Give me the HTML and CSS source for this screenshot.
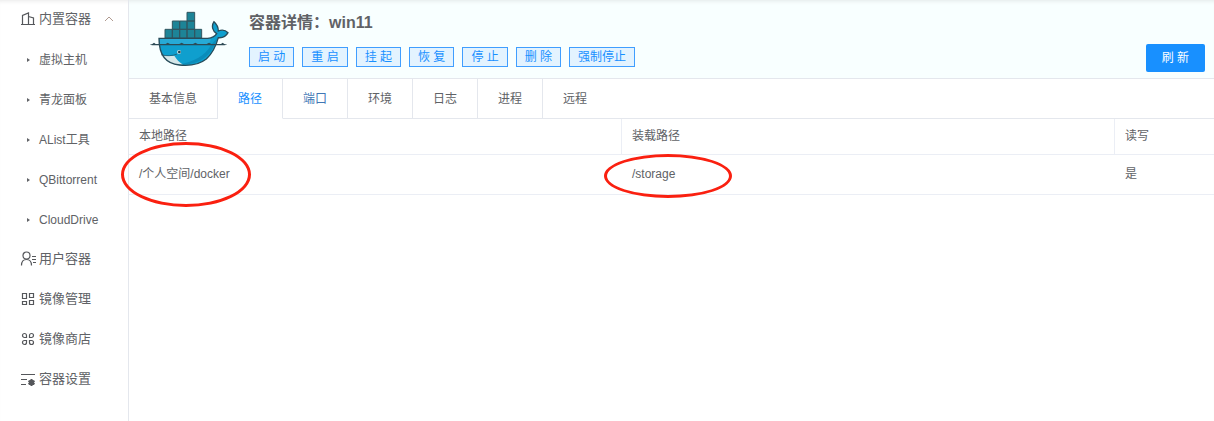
FILE: index.html
```html
<!DOCTYPE html>
<html lang="zh-CN">
<head>
  <meta charset="UTF-8">
  <title>容器详情</title>
  <link rel="stylesheet" href="styles.css">
</head>
<body>
  <nav class="sidebar">
    <a class="menu-item" href="#">
      <svg class="menu-icon" viewBox="0 0 16 16"><path d="M1 13.500h14M2.500 13.500V4.500L8.500 2v11.500M8.500 5.500l5 1.500v6.500"/></svg>
      内置容器
      <svg class="menu-arrow" viewBox="0 0 10 6"><path d="M1 5l4-4 4 4"/></svg>
    </a>
    <a class="sub-item" href="#">虚拟主机</a>
    <a class="sub-item" href="#">青龙面板</a>
    <a class="sub-item" href="#">AList工具</a>
    <a class="sub-item" href="#">QBittorrent</a>
    <a class="sub-item" href="#">CloudDrive</a>
    <a class="menu-item" href="#">
      <svg class="menu-icon" viewBox="0 0 16 16"><circle cx="6.500" cy="4.500" r="3.500"/><path d="M1.500 14.500c0-4 2-6 5-6s5 2 5 6M12 5.500h4M12 8.500h4M13 11.500h3"/></svg>
      用户容器
    </a>
    <a class="menu-item" href="#">
      <svg class="menu-icon" viewBox="0 0 16 16"><path d="M2.500 2.500h4v5h-4zM9.500 2.500h4v4h-4zM2.500 10.500h4v3h-4zM9.500 9.500h4v4h-4z"/></svg>
      镜像管理
    </a>
    <a class="menu-item" href="#">
      <svg class="menu-icon" viewBox="0 0 16 16"><path d="M6.500 6.500h-2a2 2 0 1 1 2-2zM9.500 6.500v-2a2 2 0 1 1 2 2zM6.500 9.500v2a2 2 0 1 1-2-2zM9.500 9.500h2a2 2 0 1 1-2 2z"/></svg>
      镜像商店
    </a>
    <a class="menu-item" href="#">
      <svg class="menu-icon" viewBox="0 0 16 16"><path d="M1 3.500h14M1 8.500h6M1 13.500h5"/><path class="gear" d="M11.500 8v7M8.500 9.800l6 3.400M14.500 9.800l-6 3.400"/><circle class="gear" cx="11.500" cy="11.500" r="1.700"/></svg>
      容器设置
    </a>
  </nav>

  <main class="content">
    <header class="detail-header">
      <svg class="logo" viewBox="28 33 240 168">
        <path class="logo-boxes" d="M142 37h23v26h-23zM98 63h22v25h-22zM120 63h22v25h-22zM142 63h23v25h-23zM76 88h22v26h-22zM98 88h22v26h-22zM120 88h22v26h-22zM142 88h23v26h-23zM165 88h21v26h-21z"/>
        <path class="logo-body" d="M58 115H204C216 114 226 109 231 101C219 94 214 78 223 65C231 72 236 82 236 93C246 89 258 91 265 98C259 110 248 114 236 113C229 138 218 161 200 177C180 193 149 198 119 195C82 192 58 168 58 115Z"/>
        <path class="logo-shade" d="M233 113C223 146 207 167 183 181C162 192 142 194 125 193C158 184 196 170 214 135Z"/>
        <path class="logo-belly" d="M64 164C78 169 94 169 104 167C110 177 119 187 130 194C98 195 76 184 64 164Z"/>
        <path class="logo-deck" d="M59 116H214L208 133H59Z"/>
        <path class="logo-wave" d="M30 134L38 132L43 128L48 132L60 132H78L84 128L91 132H119L126 128L133 132H160L167 128L174 132H201L208 128L215 132H238L244 132L249 128L254 132L263 134L254 136H38Z"/>
        <path class="logo-outline" d="M58 115H204C216 114 226 109 231 101C219 94 214 78 223 65C231 72 236 82 236 93C246 89 258 91 265 98C259 110 248 114 236 113C229 138 218 161 200 177C180 193 149 198 119 195C82 192 58 168 58 115Z"/>
        <path class="logo-mouth" d="M64 164C79 169 99 168 112 162"/>
        <circle class="logo-eye" cx="118" cy="156" r="6"/>
        <circle class="logo-pupil" cx="119" cy="156" r="4"/>
      </svg>
      <div class="detail-info">
        <h1>容器详情：win11</h1>
        <div class="actions">
          <button class="btn" type="button">启 动</button>
          <button class="btn" type="button">重 启</button>
          <button class="btn" type="button">挂 起</button>
          <button class="btn" type="button">恢 复</button>
          <button class="btn" type="button">停 止</button>
          <button class="btn" type="button">删 除</button>
          <button class="btn" type="button">强制停止</button>
        </div>
      </div>
      <button class="btn-refresh" type="button">刷 新</button>
    </header>

    <div class="tabs">
      <a class="tab" href="#">基本信息</a>
      <a class="tab active" href="#">路径</a>
      <a class="tab hover" href="#">端口</a>
      <a class="tab" href="#">环境</a>
      <a class="tab" href="#">日志</a>
      <a class="tab" href="#">进程</a>
      <a class="tab last" href="#">远程</a>
    </div>

    <table class="paths">
      <thead>
        <tr>
          <th>本地路径</th>
          <th>装载路径</th>
          <th class="col-rw">读写</th>
        </tr>
      </thead>
      <tbody>
        <tr>
          <td>/个人空间/docker<span class="mark mark-local"></span></td>
          <td>/storage<span class="mark mark-mount"></span></td>
          <td>是</td>
        </tr>
      </tbody>
    </table>
  </main>
</body>
</html>
```
FILE: styles.css
```css
* {
  box-sizing: border-box;
}
body {
  margin: 0;
  display: flex;
  min-height: 100vh;
  font-family: "Liberation Sans", "Noto Sans CJK SC", sans-serif;
  font-size: 12px;
  line-height: 18px;
  color: #606266;
  background: #fff;
  box-shadow: inset 0 4px 4px -3px #e8e8e8;
}
a {
  color: inherit;
  text-decoration: none;
}

/* sidebar */
.sidebar {
  flex: 0 0 129px;
  border-right: 1px solid #e4e7ed;
}
.menu-item,
.sub-item {
  display: flex;
  align-items: center;
  height: 40px;
}
.menu-item {
  padding-left: 20px;
  padding-bottom: 2px;
  font-size: 13px;
}
.menu-icon {
  width: 16px;
  height: 16px;
  margin-right: 3px;
  fill: none;
  stroke: #55575b;
  stroke-width: 1.2;
}
.menu-icon .gear {
  stroke-width: 2;
}
.menu-arrow {
  width: 10px;
  height: 6px;
  margin-left: 13px;
  fill: none;
  stroke: #b09a90;
}
.sub-item {
  padding-left: 27px;
}
.sub-item::before {
  content: "";
  margin-right: 9px;
  border: 2px solid transparent;
  border-left: 3px solid #606266;
  border-right: 0;
}

/* header */
.content {
  flex: 1;
  min-width: 0;
}
.detail-header {
  display: flex;
  height: 79px;
  padding: 11px 9px 0 20px;
  background: #f8ffff;
  border-bottom: 1px solid #e4e7ed;
  box-shadow: inset 0 4px 4px -3px #e3e8e8;
}
.logo {
  width: 80px;
  height: 56px;
  margin-right: 20px;
}
.logo-boxes {
  fill: #1d8497;
  stroke: #325660;
  stroke-width: 3;
}
.logo-body {
  fill: #0f9fce;
}
.logo-shade {
  fill: #0a8cba;
}
.logo-belly {
  fill: #d5e7e9;
}
.logo-deck {
  fill: #27aad6;
}
.logo-wave {
  fill: #2d4a55;
}
.logo-outline,
.logo-mouth {
  fill: none;
  stroke: #284c5a;
  stroke-width: 4;
}
.logo-mouth {
  stroke-width: 2;
}
.logo-eye {
  fill: #c8dde0;
}
.logo-pupil {
  fill: #24414c;
}
.detail-info {
  flex: 1;
}
.detail-info h1 {
  margin: 0 0 12px;
  font-size: 16px;
  line-height: 24px;
}
.actions {
  display: flex;
  gap: 8px;
}
.btn,
.btn-refresh {
  font-family: inherit;
  font-size: 12px;
  cursor: pointer;
}
.btn {
  height: 20px;
  padding: 0 8px;
  line-height: 18px;
  color: #1890ff;
  background: #e3f3ff;
  border: 1px solid #409eff;
}
.btn-refresh {
  height: 28px;
  margin-top: 33px;
  padding: 0 16px;
  line-height: 28px;
  color: #fff;
  background: #1890ff;
  border: 0;
  border-radius: 2px;
}

/* tabs */
.tabs {
  display: flex;
  height: 40px;
}
.tabs::after {
  content: "";
  flex: 1;
  border-bottom: 1px solid #e4e7ed;
}
.tab {
  padding: 0 20px;
  line-height: 40px;
  border-right: 1px solid #e4e7ed;
  border-bottom: 1px solid #e4e7ed;
}
.tab.active {
  color: #1890ff;
  border-bottom-color: #fff;
}
.tab.hover {
  color: #3f77b5;
}
.tab.last {
  border-right: 0;
}

/* table */
.paths {
  width: 100%;
  table-layout: fixed;
  border-spacing: 0;
}
.paths th,
.paths td {
  padding: 0 10px;
  text-align: left;
  font-weight: normal;
  border-bottom: 1px solid #ebeef5;
}
.paths th {
  height: 36px;
  padding-bottom: 2px;
  border-right: 1px solid #ebeef5;
}
.paths .col-rw {
  width: 99px;
  border-right: 0;
}
.paths td {
  position: relative;
  height: 40px;
  padding-bottom: 2px;
}

/* red rings around the two paths */
.mark {
  position: absolute;
  z-index: 1;
  border: 3px solid #fa2010;
  border-radius: 50%;
  pointer-events: none;
}
.mark-local {
  top: -13px;
  left: -8px;
  width: 130px;
  height: 65px;
}
.mark-mount {
  top: -1px;
  left: -18px;
  width: 128px;
  height: 44px;
}
```
